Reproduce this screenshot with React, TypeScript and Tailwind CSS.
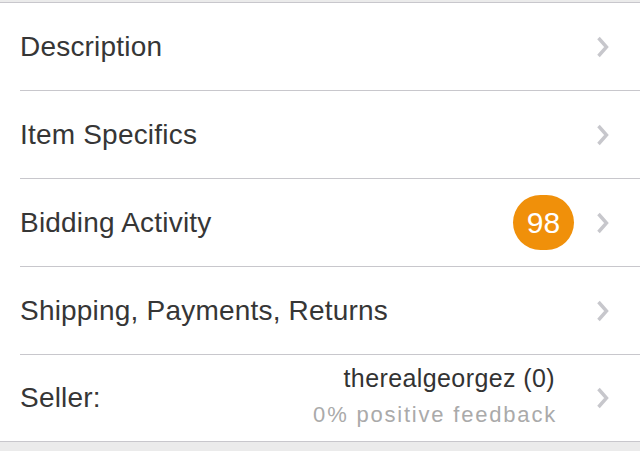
import React from "react";

const Chevron = () => (
  <svg width="16" height="24" viewBox="0 0 16 24" className="shrink-0">
    <path d="M3.5 3 L11.5 12 L3.5 21" fill="none" stroke="#c7c7cc" strokeWidth="3.4" strokeLinecap="butt" />
  </svg>
);

const Row: React.FC<{ label: string; right?: React.ReactNode; last?: boolean }> = ({ label, right, last }) => (
  <div className="pl-5">
    <div className={`flex items-center pr-[29px] ${last ? "h-[86px]" : "h-[88px] border-b border-[#c8c7cc]"}`}>
      <span className="flex-1 text-[28px] text-[#363636] tracking-[0.2px]">{label}</span>
      {right}
      <Chevron />
    </div>
  </div>
);

export default function App() {
  return (
    <div className="w-[640px] h-[451px] bg-[#ebebeb] overflow-hidden" style={{ fontFamily: '"Liberation Sans", Arial, sans-serif' }}>
      <div className="h-[2px]" />
      <div className="bg-white border-y border-[#c8c7cc]">
        <Row label="Description" />
        <Row label="Item Specifics" />
        <Row
          label="Bidding Activity"
          right={
            <div className="mr-[21px] w-[61px] h-[55px] rounded-full bg-[#f0900a] flex items-center justify-center text-white text-[30px]">
              98
            </div>
          }
        />
        <Row label="Shipping, Payments, Returns" />
        <Row
          label="Seller:"
          last
          right={
            <div className="mr-[40px] flex flex-col items-end leading-none mb-[4px]">
              <span className="text-[25px] text-[#333333] tracking-[0.4px]">therealgeorgez (0)</span>
              <span className="mt-[13px] text-[22px] text-[#aaaaaa] tracking-[1.8px] mr-[-2px]">0% positive feedback</span>
            </div>
          }
        />
      </div>
    </div>
  );
}
